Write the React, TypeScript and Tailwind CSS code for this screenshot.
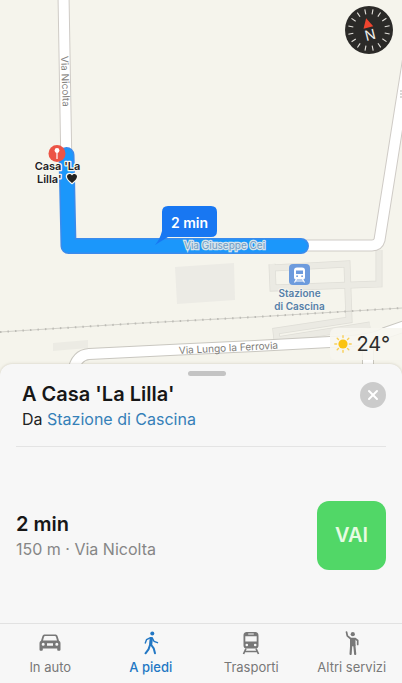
import { X } from 'lucide-react';
import { clsx } from 'clsx';

const ticks = Array.from({ length: 16 }, (_, i) => i * 22.5 + 11);

function Compass() {
  return (
    <button type="button" aria-label="Bussola" className="absolute top-[6px] right-[9px] size-12">
      <svg viewBox="0 0 48 48" className="size-full">
        <circle cx="24" cy="24" r="24" fill="#2b2a28" />
        {ticks.map((deg) => (
          <path key={deg} d="M24 3V8" stroke="#e4e2dd" strokeWidth="1.1" transform={`rotate(${deg} 24 24)`} />
        ))}
        <g transform="rotate(-14 24 24)">
          <path d="M24 12l5 9.500H19z" fill="#f0452f" />
          <text x="24" y="34" textAnchor="middle" fontSize="14" fill="#f2f0ec">N</text>
        </g>
      </svg>
    </button>
  );
}

function Weather() {
  return (
    <div className="absolute right-0 bottom-5 flex h-8 items-center gap-1 rounded-l-md bg-[#f7f6ef]/90 pr-3 pl-1">
      <svg viewBox="0 0 18 18" className="size-[18px]">
        <circle cx="9" cy="9" r="4.600" fill="#fbc310" />
        {[0, 45, 90, 135, 180, 225, 270, 315].map((deg) => (
          <path key={deg} d="M9 .8V2.600" stroke="#f8cf55" strokeWidth="1.400" strokeLinecap="round" transform={`rotate(${deg} 9 9)`} />
        ))}
      </svg>
      <span className="text-xl leading-8 text-[#2d2d2b]">24°</span>
    </div>
  );
}

function RouteMap() {
  return (
    <svg viewBox="0 0 402 380" preserveAspectRatio="xMidYMid slice" className="size-full" role="img" aria-label="Mappa del percorso">
      <rect width="402" height="380" fill="#f5f4ec" />

      {/* buildings */}
      <path d="M175 267l59-4 1 37-58 4z" fill="#ecebe5" />
      <path d="M53 343l35-3v8l-35 3z" fill="#ecebe4" />
      <g fill="none" stroke="#dfded7" strokeWidth="7">
        <path d="M272 268l75-4 2 56-73 11 1 9 93-15" />
        <path d="M272 264l1 24 106-4V250" />
      </g>
      <g fill="none" stroke="#ebeae3" strokeWidth="5.500">
        <path d="M272 268l75-4 2 56-73 11 1 9 93-15" />
        <path d="M272 264l1 24 106-4V250" />
      </g>

      {/* railway */}
      <path d="M0 332L134 323.500L255 317L402 308" fill="none" stroke="#d0cfc8" strokeWidth="1" />
      <path d="M0 332L134 323.500L255 317L402 308" fill="none" stroke="#bdbcb6" strokeWidth="2" strokeDasharray="1.500 6" />

      {/* streets */}
      <g fill="none" strokeLinejoin="round">
        <path d="M63.500-5L66.500 170M300 245.500H372Q378 245.500 379.500 240L389 180L400 110L408 60" stroke="#cfcbc6" strokeWidth="12" />
        <path d="M73 372Q76 355 89 354L180 349.500L255 346L330 342Q372 341 385 333L408 325M368 344V380" stroke="#c9c7c0" strokeWidth="12" />
        <path d="M63.500-5L66.500 170M300 245.500H372Q378 245.500 379.500 240L389 180L400 110L408 60" stroke="#fff" strokeWidth="10" />
        <path d="M73 372Q76 355 89 354L180 349.500L255 346L330 342Q372 341 385 333L408 325M368 344V380" stroke="#fff" strokeWidth="10" />
      </g>
      <path d="M400 91h2M400 94h2M400 97h2" stroke="#b5b4b0" strokeWidth="1" />
      <text transform="translate(61 56) rotate(88)" fontSize="10" fill="#85837f">Via Nicolta</text>
      <text transform="translate(179 354) rotate(-3)" fontSize="10" fill="#7e7c78">Via Lungo la Ferrovia</text>

      {/* walking route */}
      <path d="M66.500 155L68.500 246H301" fill="none" stroke="#3b8bec" strokeWidth="16" strokeLinecap="round" strokeLinejoin="round" />
      <path d="M66.500 155L68.500 246H301" fill="none" stroke="#1b97fb" strokeWidth="13" strokeLinecap="round" strokeLinejoin="round" />
      <text x="184" y="249" fontSize="10" fill="#6f9cc4" stroke="#d5e4ec" strokeWidth="2.500" paintOrder="stroke">Via Giuseppe Cei</text>
      <path d="M168 206h43q6 0 6 6v19q0 6-6 6h-43l-13 8q5-6 7-14v-19q0-6 6-6z" fill="#1877f2" />
      <text x="189.500" y="228" textAnchor="middle" fontSize="14" fontWeight="600" fill="#fff">2 min</text>

      {/* destination */}
      <circle cx="57" cy="153.500" r="8.500" fill="#ec5446" />
      <circle cx="57" cy="150.500" r="2.400" fill="#fff" />
      <path d="M57 152v7" stroke="#fff" strokeWidth="1.200" />
      <g fontSize="11" fontWeight="600" fill="#22211f" stroke="#f7f6f0" strokeWidth="2.500" strokeLinejoin="round" paintOrder="stroke">
        <text x="57.500" y="170" textAnchor="middle">Casa 'La</text>
        <text x="37" y="183">Lilla'</text>
        <path d="M72 183c-3-2.500-5-4.300-5-6.500 0-3 4-3.500 5-1 1-2.500 5-2 5 1 0 2.200-2 4-5 6.500z" />
      </g>

      {/* station */}
      <rect x="289" y="264" width="21" height="21" rx="4" fill="#6d9bdd" />
      <path fillRule="evenodd" d="M297 267.500h5q3 0 3 3v7q0 2-2 2h-7q-2 0-2-2v-7q0-3 3-3zm-1 3v3.500h7v-3.500zM296.200 276.200a.9.900 0 1 0 1.800 0a.9.900 0 1 0-1.800 0zM301.200 276.200a.9.900 0 1 0 1.800 0a.9.900 0 1 0-1.800 0z" fill="#fff" />
      <path d="M296.500 279l-2 3.500M302.500 279l2 3.500M295.500 281h8" stroke="#fff" strokeWidth="1.200" />
      <g fontSize="10" fontWeight="600" fill="#5580a8" stroke="#f7f6f0" strokeWidth="2" paintOrder="stroke" textAnchor="middle">
        <text x="299.500" y="297">Stazione</text>
        <text x="299.500" y="310">di Cascina</text>
      </g>
    </svg>
  );
}

function CarIcon() {
  return (
    <svg viewBox="0 0 24 24" className="size-6" fill="currentColor">
      <path fillRule="evenodd" d="M7 3.500h10c1.500 0 2.200.6 2.700 1.900l1.300 4.300c1 .6 1.500 1.400 1.500 2.800v6c0 .9-.5 1.300-1.300 1.300h-.7c-.9 0-1.300-.5-1.300-1.300v-1H4.800v1c0 .8-.4 1.300-1.300 1.300h-.7c-.8 0-1.300-.4-1.300-1.300v-6c0-1.400.5-2.200 1.500-2.800l1.300-4.300C4.800 4.100 5.500 3.500 7 3.500zm.2 1.600c-.7 0-1 .3-1.200.9L5 9.500h14L18 6c-.2-.6-.5-.9-1.200-.9zM3.700 13.200a1.500 1.500 0 1 0 3 0a1.500 1.500 0 1 0-3 0zM17.300 13.200a1.500 1.500 0 1 0 3 0a1.500 1.500 0 1 0-3 0zM9 12.200v2.500h6v-2.500z" />
    </svg>
  );
}

function WalkIcon() {
  return (
    <svg viewBox="0 0 24 24" className="size-6" fill="none" stroke="currentColor" strokeLinecap="round" strokeLinejoin="round">
      <circle cx="13.300" cy="2.600" r="2" fill="currentColor" stroke="none" />
      <path d="M12.300 7.500L11.700 13" strokeWidth="3.200" />
      <path d="M11.500 6.700L7.500 8.700L6.300 12M13.300 7L15 10.300L18.500 11.700" strokeWidth="1.400" />
      <path d="M12.300 14L14.700 17.300L16 22.300M11 14L9.500 18.300L6.500 22.300" strokeWidth="2" />
    </svg>
  );
}

function TrainIcon() {
  return (
    <svg viewBox="0 0 24 24" className="size-6" fill="currentColor">
      <path fillRule="evenodd" d="M8.500 1h7c3 0 4 1 4 4v9.500c0 2-1 3-3 3h-9c-2 0-3-1-3-3V5c0-3 1-4 4-4zm.7 1.400v1.200h5.600V2.400zM6.300 5.300v5.200h11.400V5.300zM6.500 14a1.300 1.300 0 1 0 2.600 0a1.300 1.300 0 1 0-2.600 0zM14.900 14a1.300 1.300 0 1 0 2.600 0a1.300 1.300 0 1 0-2.600 0z" />
      <path d="M7 17.500L4.500 23M17 17.500L19.500 23M6 20.500h12" fill="none" stroke="currentColor" strokeWidth="1.700" />
    </svg>
  );
}

function HailIcon() {
  return (
    <svg viewBox="0 0 24 24" className="size-6" fill="none" stroke="currentColor" strokeLinecap="round" strokeLinejoin="round">
      <circle cx="12.800" cy="3.200" r="2.100" fill="currentColor" stroke="none" />
      <path d="M6.500 1L7.300 4.800L10.500 7.500H15L17.700 9.500V13.500" strokeWidth="1.700" />
      <path d="M11 8.200h3.500v6H11z" fill="currentColor" strokeWidth="2" />
      <path d="M11.200 14L10.600 23M14.300 14L15.200 23" strokeWidth="2.200" />
    </svg>
  );
}

const tabs = [
  { label: 'In auto', icon: CarIcon },
  { label: 'A piedi', icon: WalkIcon, active: true },
  { label: 'Trasporti', icon: TrainIcon },
  { label: 'Altri servizi', icon: HailIcon },
];

export default function App() {
  return (
    <div className="flex min-h-screen flex-col bg-[#f5f4ec] font-['Inter','Liberation_Sans',sans-serif]">
      <div className="relative h-[380px] w-full shrink-0 overflow-hidden">
        <RouteMap />
        <Compass />
        <Weather />
      </div>

      <main className="relative -mt-4 flex flex-1 flex-col rounded-t-xl bg-[#f7f7f7] shadow-[0_0_3px_rgba(120,110,80,0.3)]">
        <div className="flex justify-center pt-[7px] pl-3">
          <div className="h-[5px] w-[38px] rounded-full bg-[#c4c4c4]" />
        </div>
        <header className="mx-4 flex items-start justify-between border-b border-[#e4e4e4] pt-1 pb-4 pl-[6px]">
          <div>
            <h1 className="text-xl leading-7 font-semibold text-[#171717]">A Casa 'La Lilla'</h1>
            <p className="text-base leading-[22px] text-[#222]">
              Da <a href="#stazione" className="text-[#3580b8]">Stazione di Cascina</a>
            </p>
          </div>
          <button type="button" aria-label="Chiudi" className="mt-[2px] flex size-[26px] items-center justify-center rounded-full bg-[#cbcbcb] text-white">
            <X className="size-4" strokeWidth={3} />
          </button>
        </header>

        <section className="flex flex-1 items-center justify-between px-4 py-6">
          <div>
            <h2 className="text-xl leading-7 font-semibold text-[#171717]">2 min</h2>
            <p className="text-base leading-[22px] text-[#868686]">150 m · Via Nicolta</p>
          </div>
          <button type="button" className="size-[69px] rounded-xl bg-[#51d767] text-xl font-semibold text-[#e6fbe2]">VAI</button>
        </section>

        <nav className="grid grid-cols-4 border-t border-[#e2e2e2] pt-[7px] pb-[6px]">
          {tabs.map(({ label, icon: Icon, active }) => (
            <button
              key={label}
              type="button"
              className={clsx(
                'flex flex-col items-center gap-[2px] text-[13px] leading-5 whitespace-nowrap',
                active ? 'font-medium text-[#2277c4]' : 'text-[#787878]',
              )}
            >
              <Icon />
              {label}
            </button>
          ))}
        </nav>
      </main>
    </div>
  );
}
